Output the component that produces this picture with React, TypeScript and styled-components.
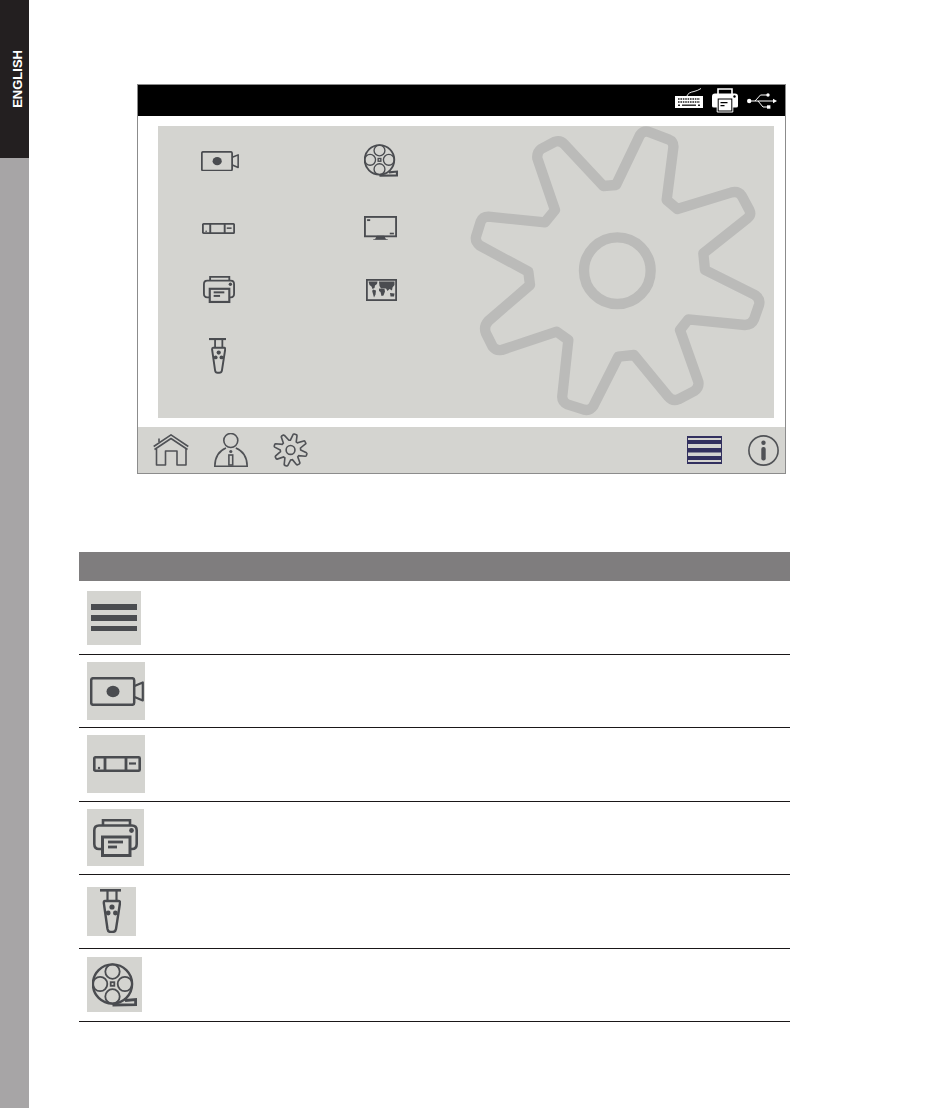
import React from "react";
import styled, { createGlobalStyle } from "styled-components";

const Global = createGlobalStyle`
  html, body { margin: 0; padding: 0; background: #fff; }
  body { font-family: "Liberation Sans", Arial, sans-serif; }
`;

const Page = styled.div`
  display: flex;
  width: 950px;
  height: 1108px;
  overflow: hidden;
  background: #fff;
`;

const Sidebar = styled.aside`
  display: flex;
  flex-direction: column;
  flex: none;
  width: 29px;
  background: #a7a5a6;
`;

const LangTab = styled.div`
  display: flex;
  align-items: center;
  justify-content: center;
  box-sizing: border-box;
  height: 158px;
  padding-left: 6px;
  background: #231f20;
`;

const LangLabel = styled.span`
  writing-mode: vertical-rl;
  transform: rotate(180deg);
  color: #fff;
  font-size: 13px;
  font-weight: 700;
  line-height: 1;
`;

const Main = styled.main`
  display: flex;
  flex-direction: column;
  flex: 1;
`;

const Screen = styled.section`
  display: flex;
  flex-direction: column;
  box-sizing: border-box;
  width: 649px;
  height: 390px;
  margin: 84px 0 0 108px;
  border: 1px solid #8c8c8c;
  border-right-width: 1.5px;
  background: #fff;
`;

const StatusBar = styled.header`
  display: flex;
  flex: none;
  align-items: center;
  justify-content: flex-end;
  gap: 9px;
  box-sizing: border-box;
  height: 31px;
  padding-right: 8px;
  background: #000;
`;

const SettingsPanel = styled.div`
  position: relative;
  display: grid;
  flex: none;
  grid-template-columns: 163px 163px;
  grid-template-rows: 66px 68px 56px 76px;
  align-content: start;
  align-items: center;
  box-sizing: border-box;
  width: 616px;
  height: 292px;
  margin: 10px 0 0 20px;
  padding: 2px 0 0 43px;
  background: #d4d4d0;
`;

const GearBackdrop = styled.svg`
  position: absolute;
  top: 0;
  right: 0;
  width: 314px;
  height: 292px;
`;

const Slot = styled.div<{ $indent?: number }>`
  display: flex;
  align-items: center;
  padding-left: ${(p) => p.$indent ?? 0}px;
`;

const Footer = styled.footer`
  display: flex;
  flex: none;
  align-items: center;
  gap: 25px;
  box-sizing: border-box;
  height: 46px;
  margin-top: 9px;
  padding: 0 6px 0 15px;
  background: #d4d4d0;
`;

const FooterEnd = styled.div`
  display: flex;
  align-items: center;
  gap: 26px;
  margin-left: auto;
`;

const Table = styled.section`
  display: flex;
  flex-direction: column;
  width: 711px;
  margin: 78px 0 0 50px;
`;

const TableHead = styled.div`
  height: 29.4px;
  background: #7f7d7e;
`;

const Row = styled.div`
  display: flex;
  align-items: center;
  box-sizing: border-box;
  height: 73.45px;
  padding-left: 8px;
  border-bottom: 1px solid #1a1718;
`;

const Tile = styled.div<{ $w: number; $h: number; $pad: number }>`
  display: flex;
  align-items: center;
  box-sizing: border-box;
  width: ${(p) => p.$w}px;
  height: ${(p) => p.$h}px;
  padding-left: ${(p) => p.$pad}px;
  background: #d4d4d0;
`;

const INK = "#4a4c50";
const LINE = "#505256";
const GEAR =
  "M430 333 L468 330 L540 180 Q552 165 570 172 L625 193 Q642 200 640 218 L620 375 L652 402 L815 352 Q835 348 845 362 L868 405 Q875 420 862 430 L730 535 L735 585 L885 660 Q902 672 897 690 L882 733 Q875 750 855 750 L685 733 L660 765 L715 920 Q718 938 703 948 L655 973 Q638 980 625 965 L522 840 L475 845 L400 993 Q390 1008 372 1004 L322 988 Q305 980 307 962 L325 795 L290 770 L125 825 Q108 828 98 815 L78 775 Q70 755 85 738 L210 630 L205 590 L60 512 Q45 500 48 485 L62 440 Q68 425 85 425 L255 442 L285 405 L232 250 Q230 232 243 222 L285 200 Q302 195 313 208 Z";

type IconProps = { w: number; color?: string };

const Camera = ({ w, color = INK }: IconProps) => (
  <svg width={w} height={(w * 29) / 54} viewBox="0 0 54 29" fill="none" stroke={color} strokeWidth="2.5" strokeLinejoin="round">
    <rect x="1.2" y="1.2" width="43" height="26.6" rx="2" />
    <path d="M44.5 9 L52.8 5.5 V23.5 L44.5 20" strokeWidth="2.2" />
    <ellipse cx="23" cy="14.5" rx="6.5" ry="5.8" fill={color} stroke="none" />
  </svg>
);

const Recorder = ({ w, color = INK }: IconProps) => (
  <svg width={w} height={(w * 16) / 48} viewBox="0 0 48 16" fill="none" stroke={color} strokeWidth="2.6">
    <rect x="1.3" y="1.3" width="45.4" height="13.4" rx="1" />
    <path d="M12 1 V15 M33 1 V15" strokeWidth="2.8" />
    <path d="M36 7.5 H43" strokeWidth="2.2" />
    <circle cx="6" cy="12" r="1.2" fill={color} stroke="none" />
  </svg>
);

const Printer = ({ w, color = INK }: IconProps) => (
  <svg width={w} height={(w * 38) / 45} viewBox="0 0 45 38" fill="none" stroke={color} strokeWidth="2.6">
    <path d="M10 6.5 V1.3 H37 V6.5" />
    <path d="M9 30 H6 Q1.3 30 1.3 25 V11.5 Q1.3 6.5 6 6.5 H39 Q43.7 6.5 43.7 11.5 V25 Q43.7 30 39 30 H37" />
    <rect x="9.5" y="18" width="27.5" height="18.5" strokeWidth="3" />
    <path d="M15 23 H30" strokeWidth="2.8" />
    <path d="M15 28 H24" strokeWidth="2.8" />
    <circle cx="38.5" cy="11.5" r="2.4" fill={color} stroke="none" />
  </svg>
);

const Remote = ({ w, color = INK }: IconProps) => (
  <svg width={w} height={(w * 44) / 21} viewBox="0 0 21 44" fill="none" stroke={color} strokeWidth="2.4">
    <path d="M0 1.3 H21" strokeWidth="2.6" />
    <path d="M7.5 1.5 V12 M16.5 1.5 V12" strokeWidth="2.2" />
    <path d="M5 12 H19 Q20 12 20 14 L16 40 Q15.5 43 12.5 43 H10.5 Q8 43 7.5 40 L3.8 14 Q3.8 12 5 12 Z" />
    <circle cx="12" cy="18" r="2.6" fill={color} stroke="none" />
    <circle cx="8.2" cy="24" r="2.4" fill={color} stroke="none" />
    <circle cx="15.4" cy="24" r="2.4" fill={color} stroke="none" />
  </svg>
);

const Reel = ({ w, color = INK }: IconProps) => (
  <svg width={w} height={(w * 44) / 45} viewBox="0 0 45 44" fill="none" stroke={color} strokeWidth="1.8">
    <circle cx="20.5" cy="21" r="19.6" strokeWidth="2.4" />
    <circle cx="20.5" cy="8.6" r="7.2" />
    <circle cx="20.5" cy="33.4" r="7.2" />
    <circle cx="8.1" cy="21" r="7.2" />
    <circle cx="32.9" cy="21" r="7.2" />
    <rect x="18.7" y="19.2" width="3.6" height="3.6" />
    <path d="M20.5 42 L43.6 41.6 V36.5 L33 37.5" strokeWidth="2.8" />
  </svg>
);

const Monitor = ({ w, color = INK }: IconProps) => (
  <svg width={w} height={(w * 24) / 32} viewBox="0 0 32 24" fill="none" stroke={color} strokeWidth="1.8">
    <rect x="0.9" y="0.9" width="30.2" height="18.8" />
    <path d="M3 4 H6" />
    <path d="M25 17 H29" strokeWidth="1.6" />
    <path d="M13 20 H19 L20 22 H12 Z" fill={color} />
    <path d="M9 23.3 H23" strokeWidth="1.4" />
  </svg>
);

const WorldMap = ({ w, color = INK }: IconProps) => (
  <svg width={w} height={(w * 22) / 31} viewBox="0 0 31 22" fill="none">
    <rect x="0.9" y="0.9" width="29.2" height="20.2" stroke={color} strokeWidth="1.8" />
    <g fill={color}>
      <path d="M2.5 2.5 H11.5 L11 5 L9 6.5 L8.5 9 L6.5 10 L5.5 7.5 L3.5 6 Z" />
      <path d="M7 10.5 L10 11.5 L9.5 15.5 L8 18.5 L7 15 L6.2 12 Z" />
      <path d="M13 2.5 H28.5 V6 L26.5 8.5 L26 11.5 L23.5 10 L21.5 12 L20 9.5 H15 L13.5 7 Z" />
      <path d="M13 9.5 L18.5 10 L19 12.5 L17.5 16.5 L15.5 17 L14.5 13 L13 12 Z" />
      <path d="M24 14 L28.5 14.5 L28 17.5 L24.5 17.5 Z" />
    </g>
  </svg>
);

const MenuBars = () => (
  <svg width="54" height="54" viewBox="0 0 54 54" fill="#4a4c50">
    <rect x="4" y="13" width="46" height="6" />
    <rect x="4" y="24" width="46" height="6" />
    <rect x="4" y="35" width="46" height="5" />
  </svg>
);

const NavyMenu = () => (
  <svg width="35" height="28" viewBox="0 0 35 28">
    <rect width="35" height="28" fill="#32305f" />
    <g fill="#d4d4d0">
      <rect x="1" y="2" width="33" height="2" />
      <rect x="1" y="8" width="33" height="4" />
      <rect x="1" y="16.5" width="33" height="3.5" />
      <rect x="1" y="24" width="33" height="2" />
    </g>
  </svg>
);

const Home = () => (
  <svg width="36" height="32" viewBox="0 0 36 32" fill="none" stroke={LINE} strokeWidth="1.6" strokeLinejoin="round">
    <path d="M0.7 12.5 L18 0.8 L35.3 12.5" />
    <path d="M1.5 15.5 L18 4.5 L34.5 15.5" />
    <path d="M6 4.5 V8" />
    <path d="M3.5 15 V31 H12.5 V17 H24 V31 H33 V15" />
  </svg>
);

const Person = () => (
  <svg width="34" height="34" viewBox="0 0 34 34" fill="none" stroke={LINE} strokeWidth="1.6">
    <circle cx="16.8" cy="7.5" r="7" />
    <path d="M12 15 Q1 19.5 0.8 33.2 H33.2 Q33 19.5 21.8 15" />
    <circle cx="16.8" cy="18.5" r="1.6" fill={LINE} stroke="none" />
    <rect x="14.9" y="22" width="3.8" height="10" />
  </svg>
);

const SmallGear = () => (
  <svg width="35" height="34" viewBox="20 145 902 885" fill="none" stroke={LINE} strokeWidth="42">
    <path d={GEAR} />
    <circle cx="472" cy="587" r="115" />
  </svg>
);

const Info = () => (
  <svg width="31" height="31" viewBox="0 0 31 31" fill="none" stroke={LINE}>
    <circle cx="15.5" cy="15.5" r="14.6" strokeWidth="1.6" />
    <circle cx="15.5" cy="7.8" r="2.2" fill={LINE} stroke="none" />
    <rect x="13.3" y="12" width="4.4" height="13.5" rx="2" fill={LINE} stroke="none" />
  </svg>
);

const KeyboardIcon = styled.svg`
  margin-bottom: 5px;
`;

const Keyboard = () => (
  <KeyboardIcon width="28" height="20" viewBox="0 0 28 20">
    <path d="M12 8 Q13 4.5 19 3.5 Q23 2.5 26 0.5" fill="none" stroke="#fff" strokeWidth="0.9" />
    <rect x="0" y="8" width="28" height="12" fill="#fff" />
    <path d="M3 11 H25" stroke="#222" strokeWidth="1.6" strokeDasharray="1.6 .8" />
    <path d="M3 14 H25" stroke="#222" strokeWidth="1.6" strokeDasharray="1.6 .8" />
    <path d="M7 17.2 H21" stroke="#222" strokeWidth="1.4" />
    <path d="M3 17.2 H5 M23 17.2 H25" stroke="#222" strokeWidth="1.4" />
  </KeyboardIcon>
);

const WhitePrinter = () => (
  <svg width="26" height="25" viewBox="0 0 26 25">
    <path d="M6 6 V1 H20 V6" fill="none" stroke="#fff" strokeWidth="1.6" />
    <path d="M3 5.5 H23 Q26 5.5 26 8.5 V18 Q26 19.5 24 19.5 H2 Q0 19.5 0 18 V8.5 Q0 5.5 3 5.5 Z" fill="#fff" />
    <path d="M5.2 11 V24 H20.8 V11" fill="#fff" stroke="#fff" strokeWidth="1" />
    <rect x="6.2" y="11" width="13.6" height="12" fill="#fff" stroke="#000" strokeWidth="1" />
    <path d="M8.5 14.6 H15.5 M8.5 17.6 H12.5" stroke="#000" strokeWidth="1.3" />
    <circle cx="22.5" cy="8.5" r="1.2" fill="#000" />
  </svg>
);

const Usb = () => (
  <svg width="30" height="16" viewBox="0 0 30 16" fill="none" stroke="#fff" strokeWidth="1">
    <circle cx="2.2" cy="8" r="2.2" fill="#fff" stroke="none" />
    <path d="M2 8 H27" />
    <path d="M30 8 L26 5.8 V10.2 Z" fill="#fff" stroke="none" />
    <path d="M8 8 L13.5 2 H20" />
    <circle cx="21" cy="2" r="1.7" fill="#fff" stroke="none" />
    <path d="M11 8 L16 14 H20" />
    <rect x="20" y="12.3" width="3.4" height="3.4" fill="#fff" stroke="none" />
  </svg>
);

const rows = [
  { key: "menu", w: 54, h: 54, pad: 0, icon: <MenuBars /> },
  { key: "camera", w: 58, h: 58, pad: 3, icon: <Camera w={54} /> },
  { key: "recorder", w: 58, h: 58, pad: 6, icon: <Recorder w={48} /> },
  { key: "printer", w: 57, h: 57, pad: 6, icon: <Printer w={45} /> },
  { key: "remote", w: 49, h: 49, pad: 13, icon: <Remote w={21} /> },
  { key: "reel", w: 55, h: 55, pad: 5, icon: <Reel w={45} /> },
];

export default function App() {
  return (
    <Page>
      <Global />
      <Sidebar>
        <LangTab>
          <LangLabel>ENGLISH</LangLabel>
        </LangTab>
      </Sidebar>
      <Main>
        <Screen>
          <StatusBar>
            <Keyboard />
            <WhitePrinter />
            <Usb />
          </StatusBar>
          <SettingsPanel>
            <GearBackdrop viewBox="0 153 942 876" fill="none" stroke="#bbbbb9" strokeWidth="31" strokeLinejoin="round">
              <path d={GEAR} />
              <circle cx="472" cy="587" r="100" />
            </GearBackdrop>
            <Slot><Camera w={38} /></Slot>
            <Slot><Reel w={34} /></Slot>
            <Slot $indent={1}><Recorder w={33} /></Slot>
            <Slot><Monitor w={33} /></Slot>
            <Slot $indent={2}><Printer w={32} /></Slot>
            <Slot $indent={2}><WorldMap w={31} /></Slot>
            <Slot $indent={8}><Remote w={17} /></Slot>
          </SettingsPanel>
          <Footer>
            <Home />
            <Person />
            <SmallGear />
            <FooterEnd>
              <NavyMenu />
              <Info />
            </FooterEnd>
          </Footer>
        </Screen>
        <Table>
          <TableHead />
          {rows.map((r) => (
            <Row key={r.key}>
              <Tile $w={r.w} $h={r.h} $pad={r.pad}>{r.icon}</Tile>
            </Row>
          ))}
        </Table>
      </Main>
    </Page>
  );
}
